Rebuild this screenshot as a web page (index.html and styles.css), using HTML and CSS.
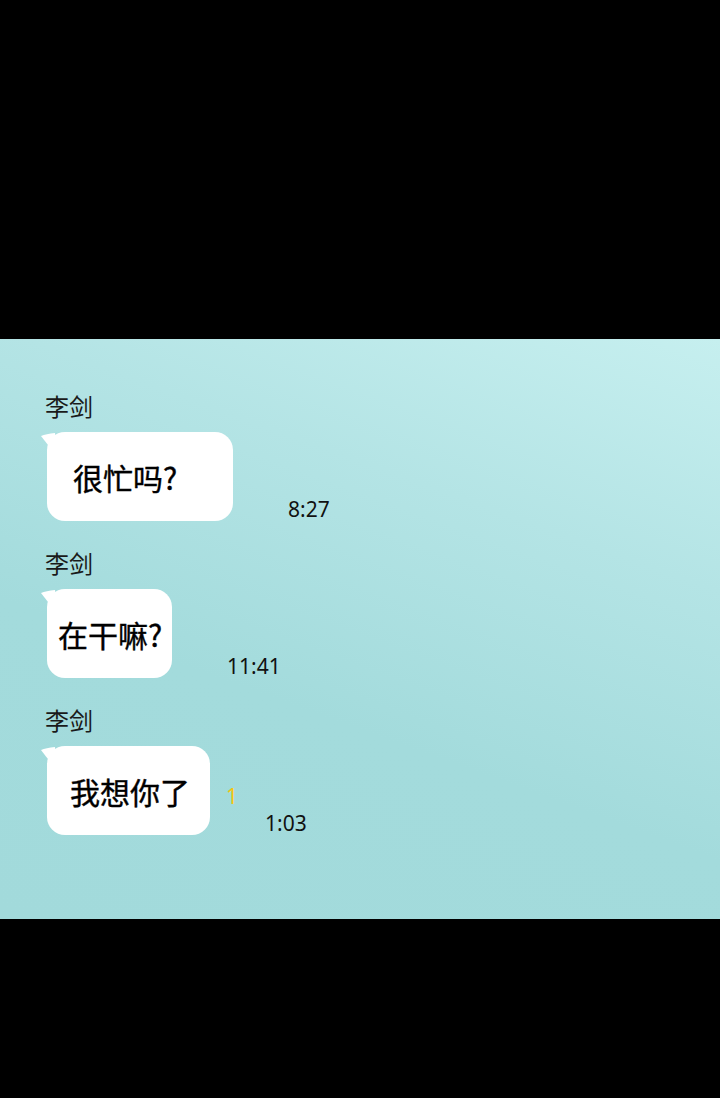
FILE: index.html
```html
<!DOCTYPE html>
<html lang="zh-CN">
<head>
  <meta charset="UTF-8" />
  <title>李剑</title>
  <link rel="stylesheet" href="styles.css">
</head>
<body>
  <div class="bar-top"></div>

  <div class="chat">
    <div class="msg">
      <div class="sender">李剑</div>
      <div class="row">
        <div class="bubble bubble-1">很忙吗?</div>
        <div class="meta">
          <span class="time">8:27</span>
        </div>
      </div>
    </div>

    <div class="msg">
      <div class="sender">李剑</div>
      <div class="row">
        <div class="bubble bubble-2">在干嘛?</div>
        <div class="meta">
          <span class="time">11:41</span>
        </div>
      </div>
    </div>

    <div class="msg">
      <div class="sender">李剑</div>
      <div class="row">
        <div class="bubble bubble-3">我想你了</div>
        <div class="meta">
          <span class="unread">1</span>
          <span class="time">1:03</span>
        </div>
      </div>
    </div>
  </div>

  <div class="bar-bottom"></div>
</body>
</html>
```

FILE: styles.css
```css
body {
  margin: 0;
  background-color: #000;
  font-family: "Noto Sans", "Noto Sans CJK SC", sans-serif;
  color: #111;
}

.bar-top {
  height: 339px;
  background-color: #000;
}

.bar-bottom {
  height: 179px;
  background-color: #000;
}

.chat {
  height: 580px;
  box-sizing: border-box;
  padding: 53px 0 0 45px;
  display: flex;
  flex-direction: column;
  gap: 28px;
  background: linear-gradient(200deg, #c6efef 0%, #b4e4e5 30%, #a3dbdc 62%, #a2dadb 100%);
}

.sender {
  font-family: "Noto Sans CJK SC", sans-serif;
  font-size: 24px;
  line-height: 27px;
  color: #1a1a1a;
  margin-bottom: 13px;
}

.row {
  display: flex;
  align-items: stretch;
}

.bubble {
  position: relative;
  height: 89px;
  margin-left: 2px;
  box-sizing: border-box;
  display: flex;
  align-items: center;
  background: #fff;
  border-radius: 18px;
  font-family: "Noto Sans CJK SC", sans-serif;
  font-size: 30px;
  color: #000;
  -webkit-text-stroke: 0.4px #000;
}

.bubble::before {
  content: "";
  position: absolute;
  left: -6px;
  top: 1px;
  width: 16px;
  height: 22px;
  background: #fff;
  clip-path: path('M0 3 Q5 1 14 0 L16 22 Q8 14 0 3 Z');
}

.bubble-1 { width: 186px; padding-left: 26px; }
.bubble-2 { width: 125px; padding-left: 11px; }
.bubble-3 { width: 163px; padding-left: 23px; }

.meta {
  display: flex;
  align-items: flex-end;
  position: relative;
  padding-left: 55px;
  padding-bottom: 0;
}

.time {
  font-size: 21px;
  line-height: 24px;
  color: #111;
}

.unread {
  position: absolute;
  left: 16px;
  top: 38px;
  font-size: 21px;
  line-height: 24px;
  color: #f3c614;
}
```
